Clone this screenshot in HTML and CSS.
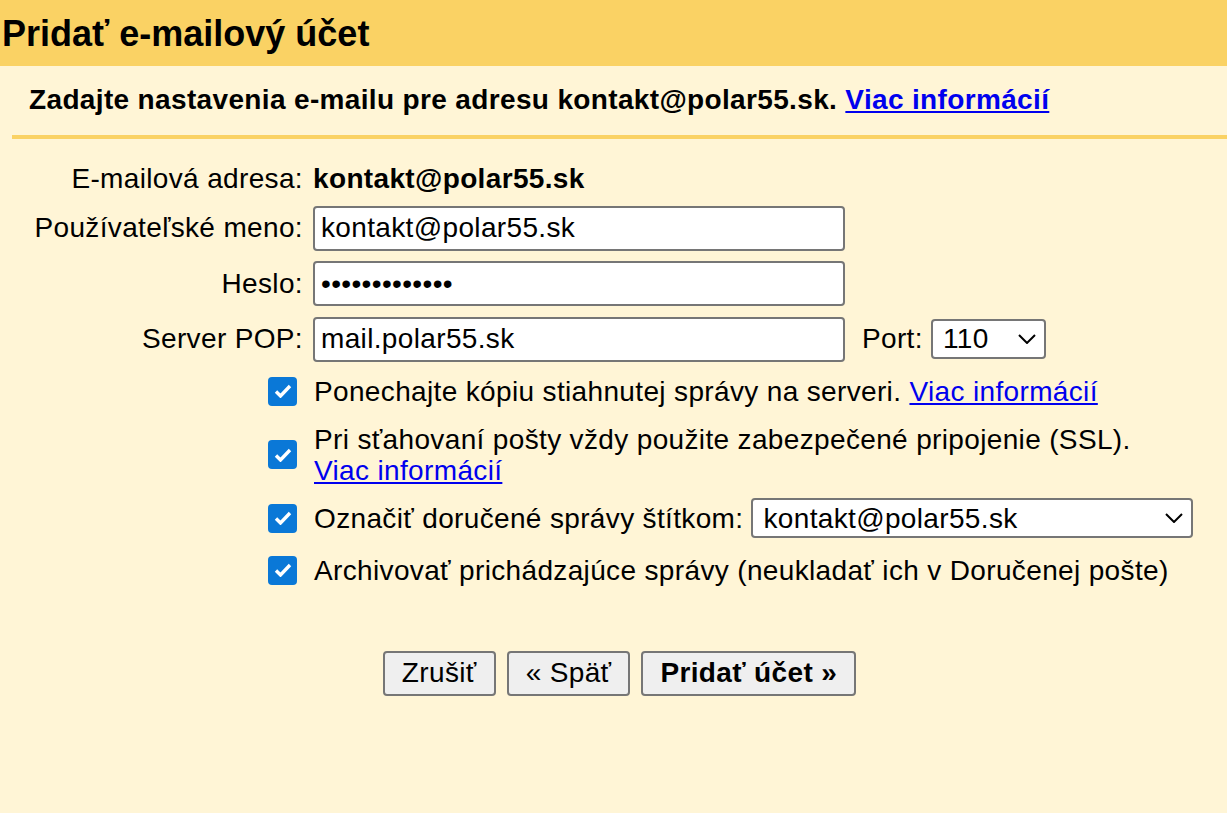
FILE: index.html
```html
<!DOCTYPE html>
<html lang="sk">
<head>
  <meta charset="UTF-8" />
  <meta name="viewport" content="width=device-width, initial-scale=1.0"/>
  <title>Pridať e-mailový účet</title>
  <link rel="stylesheet" href="styles.css">
</head>
<body>
  <div class="header">
    <h1>Pridať e-mailový účet</h1>
  </div>

  <div class="content">
    <p class="intro">Zadajte nastavenia e-mailu pre adresu kontakt@polar55.sk. <a href="#">Viac informácií</a></p>

    <div class="form">
      <div class="fields">
        <div class="lbl">E-mailová adresa:</div>
        <div class="val"><b>kontakt@polar55.sk</b></div>

        <label class="lbl" for="user">Používateľské meno:</label>
        <div class="val"><input id="user" class="text" type="text" value="kontakt@polar55.sk" /></div>

        <label class="lbl" for="pass">Heslo:</label>
        <div class="val"><input id="pass" class="text" type="password" value="aaaaaaaaaaaaa" /></div>

        <label class="lbl" for="pop">Server POP:</label>
        <div class="val">
          <input id="pop" class="text" type="text" value="mail.polar55.sk" />
          <label class="port-lbl" for="port">Port:</label>
          <div class="select port">
            <select id="port">
              <option>110</option>
              <option>995</option>
            </select>
            <svg class="chev" width="18" height="10" viewBox="0 0 18 10"><path d="M1 1 L9 9 L17 1" fill="none" stroke="#000" stroke-width="2"/></svg>
          </div>
        </div>
      </div>

      <div class="options">
        <div class="opt">
          <span class="check"><svg width="18" height="14" viewBox="0 0 18 14"><path d="M2 7.5 L6.5 12 L16 2" fill="none" stroke="#fff" stroke-width="3.4"/></svg></span>
          <span>Ponechajte kópiu stiahnutej správy na serveri. <a href="#">Viac informácií</a></span>
        </div>
        <div class="opt">
          <span class="check"><svg width="18" height="14" viewBox="0 0 18 14"><path d="M2 7.5 L6.5 12 L16 2" fill="none" stroke="#fff" stroke-width="3.4"/></svg></span>
          <span>Pri sťahovaní pošty vždy použite zabezpečené pripojenie (SSL).<br><a href="#">Viac informácií</a></span>
        </div>
        <div class="opt">
          <span class="check"><svg width="18" height="14" viewBox="0 0 18 14"><path d="M2 7.5 L6.5 12 L16 2" fill="none" stroke="#fff" stroke-width="3.4"/></svg></span>
          <span>Označiť doručené správy štítkom:</span>
          <div class="select label-sel">
            <select>
              <option>kontakt@polar55.sk</option>
            </select>
            <svg class="chev" width="18" height="10" viewBox="0 0 18 10"><path d="M1 1 L9 9 L17 1" fill="none" stroke="#000" stroke-width="2"/></svg>
          </div>
        </div>
        <div class="opt last">
          <span class="check"><svg width="18" height="14" viewBox="0 0 18 14"><path d="M2 7.5 L6.5 12 L16 2" fill="none" stroke="#fff" stroke-width="3.4"/></svg></span>
          <span>Archivovať prichádzajúce správy (neukladať ich v Doručenej pošte)</span>
        </div>
      </div>

      <div class="buttons">
        <button>Zrušiť</button>
        <button>« Späť</button>
        <button class="primary">Pridať účet »</button>
      </div>
    </div>
  </div>
</body>
</html>
```

FILE: styles.css
```css
body {
  margin: 0;
  font-family: "Liberation Sans", Arial, sans-serif;
  font-size: 28px;
  letter-spacing: 0.35px;
  color: #000;
  background: #fff5d6;
  min-height: 813px;
}
a {
  color: #0000ee;
}
.header {
  background: #fad264;
  height: 66px;
}
h1 {
  margin: 0;
  padding: 1px 0 0 2px;
  font-size: 36px;
  line-height: 65px;
  letter-spacing: 0;
}
.content {
  margin-left: 12px;
}
.intro {
  margin: 18px 0 0 17px;
  font-weight: bold;
  line-height: 32px;
}
.form {
  margin-top: 19px;
  border-top: 4px solid #fad264;
  padding-top: 24px;
}
.fields {
  display: grid;
  grid-template-columns: 291px auto;
  column-gap: 10px;
  row-gap: 10.5px;
  align-items: center;
}
.lbl {
  text-align: right;
  line-height: 32px;
}
.val {
  display: flex;
  align-items: center;
  line-height: 32px;
}
input.text {
  box-sizing: border-box;
  width: 532px;
  height: 45px;
  border: 2px solid #767676;
  border-radius: 4px;
  background: #fff;
  padding: 0 6px;
  font: inherit;
  letter-spacing: inherit;
  color: #000;
}
.port-lbl {
  margin: 0 8px 0 17px;
}
.select {
  position: relative;
  height: 40px;
}
.select select {
  box-sizing: border-box;
  appearance: none;
  width: 100%;
  height: 100%;
  border: 2px solid #767676;
  border-radius: 4px;
  background: #fff;
  font: inherit;
  letter-spacing: inherit;
  color: #000;
  padding: 0 10px;
}
.chev {
  position: absolute;
  right: 10px;
  top: 15px;
  pointer-events: none;
}
.port {
  width: 115px;
}
.label-sel {
  width: 442px;
  margin: -4.5px 0 -4.5px 8px;
}
.options {
  margin-top: 14px;
  padding-left: 256px;
}
.opt {
  display: flex;
  align-items: center;
  line-height: 31px;
  margin-bottom: 17px;
}
.opt.last {
  margin-top: 21px;
}
.check {
  flex: none;
  width: 29px;
  height: 29px;
  border-radius: 4px;
  background: #0a78d7;
  display: flex;
  align-items: center;
  justify-content: center;
  margin-right: 17px;
}
.buttons {
  display: flex;
  justify-content: center;
  gap: 11px;
  margin-top: 65px;
}
button {
  height: 45px;
  padding: 0 17px;
  border: 2px solid #767676;
  border-radius: 4px;
  background: #efefef;
  font: inherit;
  letter-spacing: inherit;
  color: #000;
}
button.primary {
  font-weight: bold;
}
```
